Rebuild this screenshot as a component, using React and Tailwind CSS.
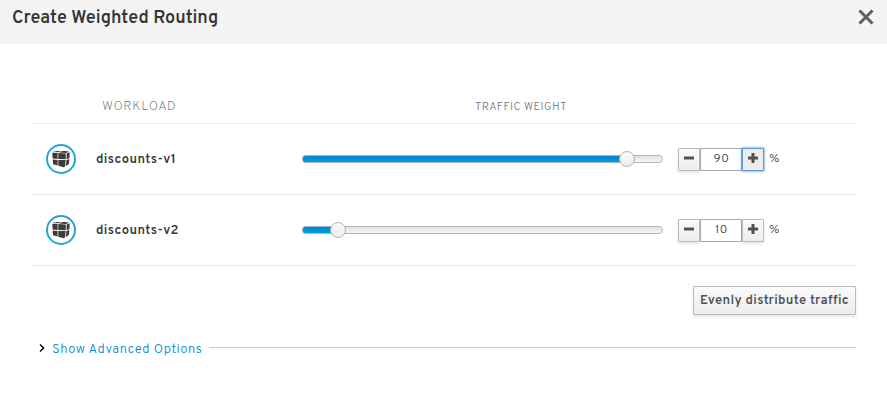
import React, { useState } from "react";

function WorkloadIcon() {
  return (
    <svg viewBox="0 0 30 30" className="block h-[30px] w-[30px]">
      <circle cx="15" cy="15" r="14" fill="#fff" stroke="#29a3d6" strokeWidth="2" />
      <g fill="#3b3b3b">
        <path d="M6.4 8.1 11 7.1 15.4 7.1 11.9 8.3Z" />
        <path d="M12.9 8.5 16.4 7.1 19.5 7.1 23.2 7.8 19.9 8.9Z" />
        <path d="M6.3 8.7 11.6 8.9V15.1L6.6 14.6Z" />
        <path d="M12.3 9 19.8 9.6V15.3L12.3 15.1Z" />
        <path d="M20.6 9.4 23.7 8.3 23.5 14.1 20.6 15.2Z" />
        <path d="M6.7 15.4 11.6 15.9V21.5L7.1 20.2Z" />
        <path d="M12.3 16 19.6 16.1 19.2 22.3 17.6 23.2 12.3 21.8Z" />
        <path d="M20.4 16 23.4 14.9 22.9 19.9 20 21.9Z" />
      </g>
    </svg>
  );
}

function Slider({ value }) {
  return (
    <div className="relative h-[8px] w-[361px]">
      <div className="h-full w-full rounded-full border border-[#b4b4b4] bg-linear-to-b from-[#e2e2e2] to-[#f5f5f5]" />
      <div
        className="absolute top-0 left-0 h-[8px] rounded-l-full border-y border-l border-[#a3b4bc] bg-linear-to-b from-[#0085cf] to-[#00a0df]"
        style={{ width: `${value}%` }}
      />
      <div
        className="absolute -top-[4px] -ml-[8px] h-[16px] w-[16px] rounded-full border border-[#b3b3b3] bg-linear-to-b from-[#fafafa] to-[#ededed]"
        style={{ left: `${value}%` }}
      />
    </div>
  );
}

function StepButton({ plus, focused, onClick }) {
  const look = focused
    ? "border-[#5b9bd1] bg-[#ededed] shadow-[0_0_2px_1px_rgba(91,155,209,0.6)] relative"
    : "border-[#bbb] bg-linear-to-b from-[#fafafa] to-[#ededed] shadow-[0_2px_3px_rgba(3,3,3,0.1)]";
  return (
    <button
      onClick={onClick}
      className={`flex h-[23px] w-[22px] items-center justify-center rounded-[1px] border ${look}`}
    >
      <svg viewBox="0 0 10 10" className="-mt-[2px] h-[10px] w-[10px]" fill="#4d5258">
        <rect x="0" y="3.5" width="10" height="3" rx="0.6" />
        {plus && <rect x="3.5" y="0" width="3" height="10" rx="0.6" />}
      </svg>
    </button>
  );
}

function Row({ name, value, focused, onChange }) {
  return (
    <div className="flex h-[71px] items-center border-b border-[#ebebeb] pl-[15px]">
      <WorkloadIcon />
      <div className="ml-5 w-[206px] pt-[2px] text-[13px] leading-5 font-semibold tracking-[0.43px] text-[#363636]">
        {name}
      </div>
      <Slider value={value} />
      <div className="ml-[15px] flex">
        <StepButton onClick={() => onChange(value - 1)} />
        <div className="flex h-[23px] w-[42px] items-center justify-center border border-[#aaa] pl-px text-[12px] leading-4 font-light tracking-[0.6px] text-[#363636]">
          {value}
        </div>
        <StepButton plus focused={focused} onClick={() => onChange(value + 1)} />
      </div>
      <div className="ml-[5px] text-[12px] leading-4 font-light text-[#363636]">%</div>
    </div>
  );
}

export default function App() {
  const [first, setFirst] = useState(90);
  const setWeight = (v) => setFirst(Math.max(0, Math.min(100, v)));
  return (
    <div className="h-[402px] w-[887px] overflow-hidden bg-white font-['Overpass','Inter',sans-serif] text-[#363636]">
      <header className="flex h-[44px] items-start justify-between bg-[#f4f4f4] pr-[13px] pl-3">
        <h1 className="mt-[7px] text-[18px] leading-6 font-semibold tracking-[0.04px] whitespace-nowrap">
          Create Weighted Routing
        </h1>
        <button className="mt-[9px]">
          <svg viewBox="0 0 16 16" className="block h-4 w-4" stroke="#5e5e5e" strokeWidth="3">
            <path d="M1.5 1.5 14.5 14.5M14.5 1.5 1.5 14.5" />
          </svg>
        </button>
      </header>
      <main className="mr-[31px] ml-[31px]">
        <div className="flex h-[80px] items-end border-b border-[#ebebeb] pb-[8px] text-[#72767b]">
          <div className="w-[444px] pl-[71px] text-[13px] leading-4 font-extralight tracking-[0.6px]">WORKLOAD</div>
          <div className="pb-px text-[11px] leading-[14px] font-light tracking-[0.5px]">TRAFFIC WEIGHT</div>
        </div>
        <Row name="discounts-v1" value={first} focused onChange={setWeight} />
        <Row name="discounts-v2" value={100 - first} onChange={(v) => setWeight(100 - v)} />
        <div className="flex justify-end pt-5">
          <button
            onClick={() => setFirst(50)}
            className="h-[29px] w-[163px] rounded-[1px] border border-[#bbb] bg-linear-to-b from-[#fafafa] to-[#ededed] pt-px text-[13px] leading-5 font-semibold tracking-[0.35px] whitespace-nowrap text-[#4d5258] shadow-[0_2px_3px_rgba(3,3,3,0.1)]"
          >
            Evenly distribute traffic
          </button>
        </div>
        <div className="mt-[23px] flex h-5 items-center pl-2">
          <svg viewBox="0 0 6 8" className="h-2 w-[6px]" fill="none" stroke="#030303" strokeWidth="1.4">
            <path d="M1 0.5 4.6 4 1 7.5" />
          </svg>
          <button className="ml-[7px] w-[157px] pt-[3px] text-left text-[13px] leading-5 font-light tracking-[0.54px] whitespace-nowrap text-[#0088ce]">
            Show Advanced Options
          </button>
          <div className="mb-px h-px flex-1 bg-[#cacaca]" />
        </div>
      </main>
    </div>
  );
}
